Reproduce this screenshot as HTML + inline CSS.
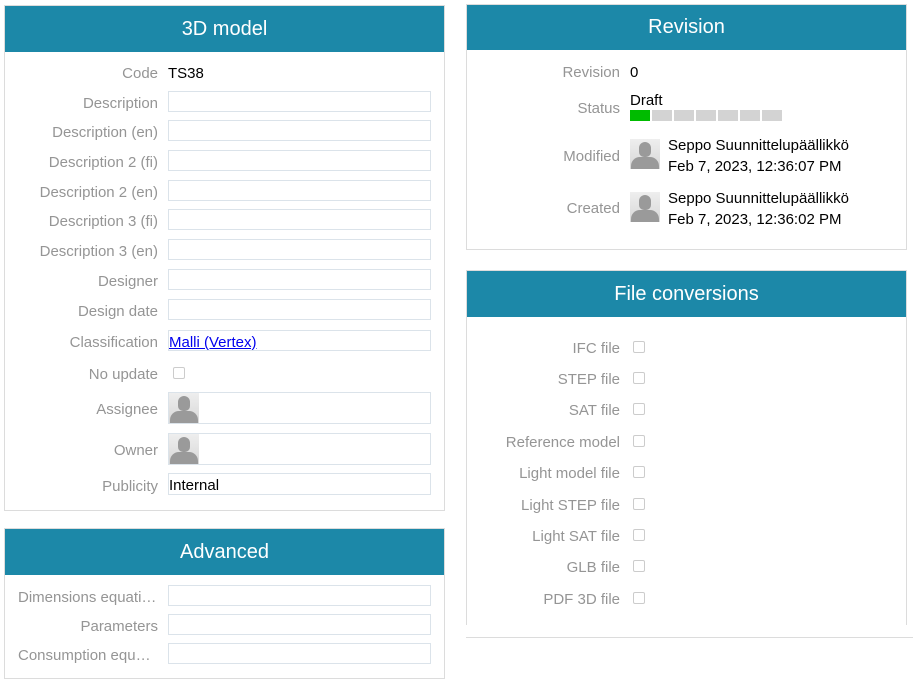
<!DOCTYPE html><html><head><style>
body{margin:0;width:913px;height:682px;background:#fff;font-family:"Liberation Sans",sans-serif;font-size:15px;position:relative;overflow:hidden}
.p{position:absolute;border:1px solid #dcdcdc;box-sizing:border-box}
.h{position:absolute;left:0;right:0;top:0;background:#1c88a8;color:#fff;font-size:20px;text-align:center}
.l{position:absolute;color:#959595;text-align:right;white-space:nowrap;overflow:hidden;text-overflow:ellipsis;padding-top:2px}
.i{position:absolute;border:1px solid #dbe3ea;box-sizing:border-box;height:21px;width:263px;left:168px}
.v{position:absolute;color:#000;white-space:nowrap;padding-top:2px}
.cb{position:absolute;width:12px;height:12px;border:1px solid #ccc;border-radius:2px;box-sizing:border-box}
.av{position:absolute;width:30px;height:30px;background:linear-gradient(#eee,#d8d8d8);overflow:hidden}
.av:before{content:"";position:absolute;left:9px;top:3px;width:12px;height:15px;background:#9a9a9a;border-radius:6px 6px 5px 5px}
.av:after{content:"";position:absolute;left:1px;top:18px;width:28px;height:14px;background:#9a9a9a;border-radius:9px 9px 0 0}
</style></head><body>
<div class="p" style="left:4px;top:5px;width:441px;height:506px"><div class="h" style="height:46px;line-height:46px">3D model</div></div>
<div class="p" style="left:4px;top:528px;width:441px;height:151px"><div class="h" style="height:46px;line-height:46px">Advanced</div></div>
<div class="p" style="left:466px;top:4px;width:441px;height:246px"><div class="h" style="height:45px;line-height:45px">Revision</div></div>
<div class="p" style="left:466px;top:270px;width:441px;height:355px;border-bottom:none"><div class="h" style="height:46px;line-height:46px">File conversions</div></div>
<div style="position:absolute;left:466px;top:637px;width:447px;height:1px;background:#dcdcdc"></div>

<div class="l" style="left:10px;width:148px;top:63px">Code</div><div class="v" style="left:168px;top:63px">TS38</div>
<div class="l" style="left:10px;width:148px;top:93px">Description</div><div class="i" style="top:91px"></div>
<div class="l" style="left:10px;width:148px;top:122px">Description (en)</div><div class="i" style="top:120px"></div>
<div class="l" style="left:10px;width:148px;top:152px">Description 2 (fi)</div><div class="i" style="top:150px"></div>
<div class="l" style="left:10px;width:148px;top:182px">Description 2 (en)</div><div class="i" style="top:180px"></div>
<div class="l" style="left:10px;width:148px;top:211px">Description 3 (fi)</div><div class="i" style="top:209px"></div>
<div class="l" style="left:10px;width:148px;top:241px">Description 3 (en)</div><div class="i" style="top:239px"></div>
<div class="l" style="left:10px;width:148px;top:271px">Designer</div><div class="i" style="top:269px"></div>
<div class="l" style="left:10px;width:148px;top:301px">Design date</div><div class="i" style="top:299px"></div>
<div class="l" style="left:10px;width:148px;top:332px">Classification</div><div class="i" style="top:330px"></div><div class="v" style="left:169px;top:332px;color:#00e;text-decoration:underline">Malli (Vertex)</div>
<div class="l" style="left:10px;width:148px;top:364px">No update</div><div class="cb" style="left:173px;top:367px"></div>
<div class="l" style="left:10px;width:148px;top:399px">Assignee</div><div class="i" style="top:392px;height:32px"></div><div class="av" style="left:169px;top:393px"></div>
<div class="l" style="left:10px;width:148px;top:440px">Owner</div><div class="i" style="top:433px;height:32px"></div><div class="av" style="left:169px;top:434px"></div>
<div class="l" style="left:10px;width:148px;top:476px">Publicity</div><div class="i" style="top:473px;height:22px"></div><div class="v" style="left:169px;top:475px">Internal</div>

<div class="l" style="left:18px;width:140px;top:587px;text-align:left">Dimensions equations</div><div class="i" style="top:585px"></div>
<div class="l" style="left:18px;width:140px;top:616px">Parameters</div><div class="i" style="top:614px"></div>
<div class="l" style="left:18px;width:140px;top:645px;text-align:left">Consumption equations</div><div class="i" style="top:643px"></div>

<div class="l" style="left:470px;width:150px;top:62px">Revision</div><div class="v" style="left:630px;top:62px">0</div>
<div class="l" style="left:470px;width:150px;top:98px">Status</div><div class="v" style="left:630px;top:90px">Draft</div>
<div style="position:absolute;left:630px;top:110px;height:11px;width:160px">
<span style="position:absolute;left:0;width:20px;height:11px;background:#00bb00"></span>
<span style="position:absolute;left:22px;width:20px;height:11px;background:#d3d3d3"></span>
<span style="position:absolute;left:44px;width:20px;height:11px;background:#d3d3d3"></span>
<span style="position:absolute;left:66px;width:20px;height:11px;background:#d3d3d3"></span>
<span style="position:absolute;left:88px;width:20px;height:11px;background:#d3d3d3"></span>
<span style="position:absolute;left:110px;width:20px;height:11px;background:#d3d3d3"></span>
<span style="position:absolute;left:132px;width:20px;height:11px;background:#d3d3d3"></span></div>
<div class="l" style="left:470px;width:150px;top:146px">Modified</div><div class="av" style="left:630px;top:139px"></div>
<div class="v" style="left:668px;top:135px">Seppo Suunnittelupäällikkö</div><div class="v" style="left:668px;top:156px">Feb 7, 2023, 12:36:07 PM</div>
<div class="l" style="left:470px;width:150px;top:198px">Created</div><div class="av" style="left:630px;top:192px"></div>
<div class="v" style="left:668px;top:188px">Seppo Suunnittelupäällikkö</div><div class="v" style="left:668px;top:209px">Feb 7, 2023, 12:36:02 PM</div>

<div class="l" style="left:470px;width:150px;top:338px">IFC file</div><div class="cb" style="left:633px;top:341px"></div>
<div class="l" style="left:470px;width:150px;top:369px">STEP file</div><div class="cb" style="left:633px;top:372px"></div>
<div class="l" style="left:470px;width:150px;top:400px">SAT file</div><div class="cb" style="left:633px;top:403px"></div>
<div class="l" style="left:470px;width:150px;top:432px">Reference model</div><div class="cb" style="left:633px;top:435px"></div>
<div class="l" style="left:470px;width:150px;top:463px">Light model file</div><div class="cb" style="left:633px;top:466px"></div>
<div class="l" style="left:470px;width:150px;top:495px">Light STEP file</div><div class="cb" style="left:633px;top:498px"></div>
<div class="l" style="left:470px;width:150px;top:526px">Light SAT file</div><div class="cb" style="left:633px;top:529px"></div>
<div class="l" style="left:470px;width:150px;top:557px">GLB file</div><div class="cb" style="left:633px;top:560px"></div>
<div class="l" style="left:470px;width:150px;top:589px">PDF 3D file</div><div class="cb" style="left:633px;top:592px"></div>
</body></html>
